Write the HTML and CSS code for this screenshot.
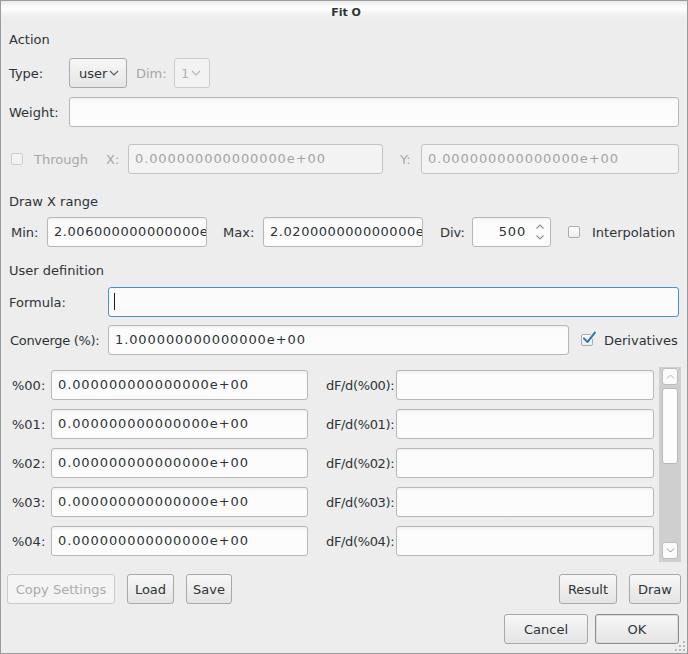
FILE: index.html
```html
<!DOCTYPE html>
<html>
<head>
<meta charset="utf-8">
<link rel="stylesheet" href="styles.css">
</head>
<body>
<div class="window">
  <div class="titlebar">Fit O</div>
  <div class="content">
    <div class="heading">Action</div>
    <div class="row r-type">
      <span class="lbl w-type">Type:</span>
      <div class="combo c-user">user<svg class="chev" width="10" height="6" viewBox="0 0 10 6"><path d="M1 1 L5 5 L9 1" fill="none" stroke="#5a5e5f" stroke-width="1.2"/></svg></div>
      <span class="lbl dis w-dim">Dim:</span>
      <div class="combo c-dim disabled">1<svg class="chev" width="10" height="6" viewBox="0 0 10 6"><path d="M1 1 L5 5 L9 1" fill="none" stroke="#b5b7b7" stroke-width="1.2"/></svg></div>
    </div>
    <div class="row r-weight">
      <span class="lbl w-type">Weight:</span>
      <div class="field grow"></div>
    </div>
    <div class="row r-through">
      <span class="check disabled cb-through"></span>
      <span class="lbl dis w-through">Through</span>
      <span class="lbl dis w-x">X:</span>
      <div class="field num disabled w-xin">0.000000000000000e+00</div>
      <span class="lbl dis w-y">Y:</span>
      <div class="field num disabled grow">0.000000000000000e+00</div>
    </div>
    <div class="heading h-draw">Draw X range</div>
    <div class="row r-min">
      <span class="lbl w-min">Min:</span>
      <div class="field num range w-range">2.006000000000000e+00</div>
      <span class="lbl w-max">Max:</span>
      <div class="field num range w-range">2.020000000000000e+00</div>
      <span class="lbl w-div">Div:</span>
      <div class="field spin">
        <span class="spin-val">500</span>
        <svg class="spin-arr" width="10" height="18" viewBox="0 0 10 18"><path d="M1.5 5.5 L5 2 L8.5 5.5" fill="none" stroke="#8a8d8e" stroke-width="1.1"/><path d="M1.5 12.5 L5 16 L8.5 12.5" fill="none" stroke="#8a8d8e" stroke-width="1.1"/></svg>
      </div>
      <span class="check cb-interp"></span>
      <span class="lbl l-interp">Interpolation</span>
    </div>
    <div class="heading h-user">User definition</div>
    <div class="row r-formula">
      <span class="lbl w-formula">Formula:</span>
      <div class="field focus grow"><span class="cursor"></span></div>
    </div>
    <div class="row r-conv">
      <span class="lbl w-formula l-conv">Converge (%):</span>
      <div class="field num w-conv">1.000000000000000e+00</div>
      <span class="check checked cb-deriv"><svg class="tick" width="16" height="16" viewBox="0 0 16 16"><path d="M3 8.5 L6.5 12 L14 2.5" fill="none" stroke="#ffffff" stroke-width="4" stroke-linecap="round" stroke-linejoin="round"/><path d="M3 8.5 L6.5 12 L14 2.5" fill="none" stroke="#3b77c2" stroke-width="2.2" stroke-linecap="round" stroke-linejoin="round"/></svg></span>
      <span class="lbl l-deriv">Derivatives</span>
    </div>
    <div class="params">
      <div class="plist">
        <div class="prow"><span class="lbl w-pl">%00:</span><div class="field num w-pin">0.000000000000000e+00</div><span class="lbl w-dl">dF/d(%00):</span><div class="field w-din"></div></div>
        <div class="prow"><span class="lbl w-pl">%01:</span><div class="field num w-pin">0.000000000000000e+00</div><span class="lbl w-dl">dF/d(%01):</span><div class="field w-din"></div></div>
        <div class="prow"><span class="lbl w-pl">%02:</span><div class="field num w-pin">0.000000000000000e+00</div><span class="lbl w-dl">dF/d(%02):</span><div class="field w-din"></div></div>
        <div class="prow"><span class="lbl w-pl">%03:</span><div class="field num w-pin">0.000000000000000e+00</div><span class="lbl w-dl">dF/d(%03):</span><div class="field w-din"></div></div>
        <div class="prow"><span class="lbl w-pl">%04:</span><div class="field num w-pin">0.000000000000000e+00</div><span class="lbl w-dl">dF/d(%04):</span><div class="field w-din"></div></div>
      </div>
      <div class="sbar">
        <div class="sbtn"><svg width="9" height="5" viewBox="0 0 9 5"><path d="M1 4.5 L4.5 1 L8 4.5" fill="none" stroke="#b4b6b6" stroke-width="1"/></svg></div>
        <div class="slider"></div>
        <div class="sspace"></div>
        <div class="sbtn"><svg width="9" height="5" viewBox="0 0 9 5"><path d="M1 0.5 L4.5 4 L8 0.5" fill="none" stroke="#8e9192" stroke-width="1"/></svg></div>
      </div>
    </div>
    <div class="row r-btns">
      <div class="btn disabled b-copy">Copy Settings</div>
      <div class="btn b-load">Load</div>
      <div class="btn b-save">Save</div>
      <div class="spacer"></div>
      <div class="btn b-result">Result</div>
      <div class="btn b-draw">Draw</div>
    </div>
    <div class="row r-dialog">
      <div class="btn b-cancel">Cancel</div>
      <div class="btn default b-ok">OK</div>
    </div>
  </div>
  <svg class="grip" width="10" height="10" viewBox="0 0 10 10">
    <rect x="8" y="0" width="2" height="2" fill="#b9b9b9"/>
    <rect x="4" y="4" width="2" height="2" fill="#b9b9b9"/><rect x="8" y="4" width="2" height="2" fill="#b9b9b9"/>
    <rect x="0" y="8" width="2" height="2" fill="#b9b9b9"/><rect x="4" y="8" width="2" height="2" fill="#b9b9b9"/><rect x="8" y="8" width="2" height="2" fill="#b9b9b9"/>
  </svg>
</div>
</body>
</html>
```
FILE: styles.css
```css
* { box-sizing: border-box; }
html, body { margin: 0; padding: 0; background: #ededed; }
body {
  font-family: "DejaVu Sans", "Noto Sans", sans-serif;
  font-size: 13px;
  color: #2e3436;
}
.window {
  width: 688px;
  height: 654px;
  border: 1px solid #9c9c9c;
  background: #ededed;
  position: relative;
  display: flex;
  flex-direction: column;
  overflow: hidden;
}
.titlebar {
  height: 22px;
  flex: none;
  background: linear-gradient(#e9e9e9 0px, #fbfbfb 5px, #fdfdfd 8px, #efefef 15px, #ececec 22px);
  text-align: center;
  font-weight: bold;
  font-size: 11px;
  line-height: 24px;
  color: #2e3436;
  padding-left: 4px;
}
.content {
  padding: 9px 8px 0 8px;
  display: flex;
  flex-direction: column;
}
.heading { height: 16px; line-height: 16px; }
.h-draw { margin-top: 20px; }
.h-user { margin-top: 16px; }

.row { display: flex; align-items: center; height: 30px; flex: none; }
.r-type { margin-top: 10px; }
.r-weight { margin-top: 9px; }
.r-through { margin-top: 17px; }
.r-min { margin-top: 7px; }
.r-formula { margin-top: 8px; }
.r-conv { margin-top: 8px; }
.r-btns { margin-top: 12px; margin-left: -2px; margin-right: -2px; }
.r-dialog { margin-top: 10px; justify-content: flex-end; }

.lbl { flex: none; white-space: nowrap; }
.dis { color: #a5a8a8; }
.w-type { width: 60px; }
.w-dim { width: 38px; margin-left: 9px; }
.w-through { width: 72px; margin-left: 11px; }
.w-x { width: 22px; }
.w-y { width: 21px; margin-left: 17px; }
.w-min { width: 36px; margin-left: 2px; }
.w-max { width: 40px; margin-left: 16px; }
.w-div { width: 32px; margin-left: 17px; }
.l-interp { margin-left: 12px; }
.w-formula { width: 99px; }
.l-conv { padding-left: 1px; letter-spacing: -0.3px; }
.l-deriv { margin-left: 11px; }

.field {
  height: 30px;
  flex: none;
  border: 1px solid #b7b7b7;
  border-radius: 3px;
  background: linear-gradient(#f0f0f0 0px, #fbfbfb 3px, #fcfcfc);
  padding: 0 6px;
  line-height: 28px;
  white-space: nowrap;
  overflow: hidden;
  position: relative;
}
.field.grow { flex: 1; }
.field.num { letter-spacing: 0.9px; }
.field.range { letter-spacing: 0.55px; padding: 0 0 0 6px; }
.field.disabled {
  background: #f3f3f3;
  border-color: #c3c3c3;
  color: #a3a5a5;
}
.field.focus { border-color: #4a90d9; background: #fbfbfb; }
.cursor {
  position: absolute;
  left: 5px;
  top: 5px;
  width: 1px;
  height: 17px;
  background: #1c1c1c;
}
.w-xin { width: 255px; }
.w-range { width: 160px; }
.w-conv { width: 461px; }

.spin { width: 79px; display: flex; align-items: center; justify-content: flex-end; padding: 0 5px 0 6px; }
.spin-val { letter-spacing: 0.8px; margin-right: 9px; }
.spin-arr { display: block; }

.combo {
  height: 30px;
  flex: none;
  border: 1px solid #a9a9a9;
  border-radius: 3px;
  background: linear-gradient(#f7f7f7, #e5e5e5);
  display: flex;
  align-items: center;
  padding-left: 9px;
}
.combo .chev { margin-left: 2px; display: block; }
.c-user { width: 58px; }
.c-dim { width: 36px; padding-left: 6px; }
.combo.disabled { background: #f2f2f2; border-color: #cbcbcb; color: #b0b2b2; }

.check {
  width: 12px;
  height: 12px;
  flex: none;
  border: 1px solid #acacac;
  border-radius: 2px;
  background: linear-gradient(#ffffff, #ececec);
  position: relative;
}
.check.disabled { border-color: #cdcdcd; background: #f2f2f2; }
.cb-through { margin-left: 2px; }
.cb-interp { margin-left: 17px; }
.cb-deriv { margin-left: 12px; }
.tick { position: absolute; left: -1px; top: -5px; overflow: visible; }

.params { display: flex; margin-top: 12px; height: 195px; margin-right: -2px; flex: none; }
.plist { flex: 1; display: flex; flex-direction: column; padding-top: 3px; gap: 9px; }
.prow { display: flex; align-items: center; height: 30px; }
.w-pl { width: 42px; padding-left: 3px; }
.w-pin { width: 257px; }
.w-dl { width: 70px; margin-left: 18px; letter-spacing: -0.35px; }
.w-din { width: 258px; }

.sbar {
  width: 22px;
  margin-left: 5px;
  background: #cfcfcf;
  display: flex;
  flex-direction: column;
  padding: 1px 3px 3px 3px;
}
.sbtn {
  height: 17px;
  border: 1px solid #bdbdbd;
  border-radius: 3px;
  background: #fbfbfb;
  display: flex;
  align-items: center;
  justify-content: center;
}
.sbtn svg { display: block; }
.slider {
  height: 76px;
  margin-top: 3px;
  border: 1px solid #b9b9b9;
  border-radius: 3px;
  background: #fdfdfd;
}
.sspace { flex: 1; }

.spacer { flex: 1; }
.btn {
  height: 30px;
  flex: none;
  border: 1px solid #a8a8a8;
  border-radius: 3px;
  background: linear-gradient(#f7f7f7, #e4e4e4);
  display: flex;
  align-items: center;
  justify-content: center;
  color: #2e3436;
}
.btn.disabled { background: #f4f4f4; border-color: #cacaca; color: #aaacac; }
.btn.default { border-color: #8d8d8d; box-shadow: inset 0 0 0 1px #dcdcdc; }
.b-copy { width: 108px; }
.b-load { width: 47px; margin-left: 12px; }
.b-save { width: 46px; margin-left: 12px; }
.b-result { width: 58px; }
.b-draw { width: 52px; margin-left: 12px; }
.b-cancel { width: 84px; }
.b-ok { width: 84px; margin-left: 7px; }

.grip { position: absolute; right: 2px; bottom: 2px; }
```
